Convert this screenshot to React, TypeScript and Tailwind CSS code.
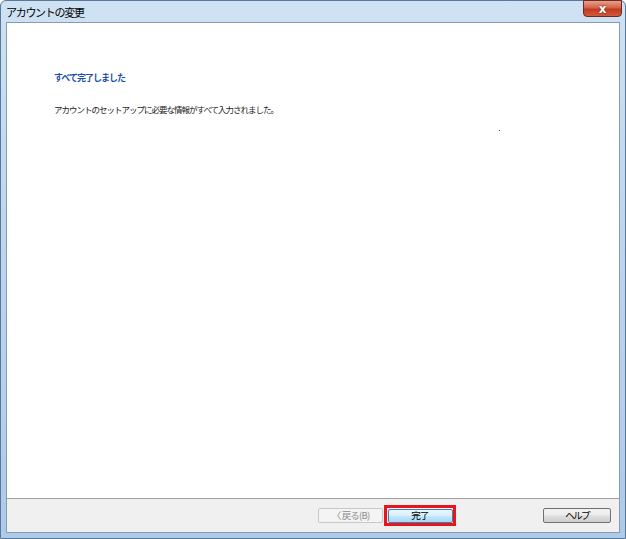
import React from "react";

export default function App() {
  const font = { fontFamily: '"Noto Sans CJK JP", "Noto Sans", sans-serif' };
  return (
    <div className="w-[626px] h-[539px] overflow-hidden bg-white" style={font}>
      <div className="relative w-[626px] h-[539px] rounded-t-[6px] border border-[#5a7898] bg-[linear-gradient(180deg,#cfe2f4_0%,#bfd6ee_40%,#aecaea_100%)] flex flex-col">
        {/* title bar */}
        <div className="h-[21px] flex items-center pl-[5px] text-[11px] tracking-[-1.3px] text-black leading-none">
          <span className="mt-[2px]">アカウントの変更</span>
        </div>
        {/* close button */}
        <div className="absolute top-[-1px] right-[3px] w-[39px] h-[17px] rounded-b-[4px] border border-[#6b2a20] bg-[linear-gradient(180deg,#e8a08c_0%,#d5624a_45%,#c33b1f_55%,#d0593c_100%)] flex items-center justify-center">
          <span className="text-white font-bold text-[12px] leading-none" style={{ fontFamily: '"DejaVu Sans", sans-serif', textShadow: "0 0 2px #5a1a10" }}>x</span>
        </div>
        {/* client */}
        <div className="flex-1 flex flex-col mx-[5px] mb-[5px] border border-[#8a9bb0] bg-white">
          <div className="flex-1 relative bg-white">
            <div className="pl-[47px] pt-[48px]">
              <div className="text-[#1e4fa8] font-bold text-[9px] tracking-[-1px] leading-[14px]">すべて完了しました</div>
              <div className="mt-[17px] text-[#222] text-[8.5px] tracking-[-1px] leading-[14px]">アカウントのセットアップに必要な情報がすべて入力されました。</div>
            </div>
            <div className="absolute left-[492px] top-[107px] w-[1px] h-[1px] bg-[#555]" />
          </div>
          <div className="h-[34px] shrink-0 border-t border-[#a0a0a0] bg-[#f0f0f0] flex items-center">
            <div className="ml-[311px] w-[65px] h-[15px] border border-[#c8c8c8] rounded-[2px] bg-[#f4f4f4] flex items-center justify-center text-[9.5px] tracking-[-0.8px] text-[#8c8c8c] leading-none">
              〈 戻る(B)
            </div>
            <div className="ml-[1px] w-[72px] h-[21px] border-[3px] border-[#e8141e] flex items-center justify-center">
              <div className="w-[65px] h-[14px] border border-[#3c7fb1] rounded-[2px] bg-[linear-gradient(180deg,#eaf6fd_0%,#d9f0fc_45%,#bee6fd_55%,#a7d9f5_100%)] flex items-center justify-center text-[9.5px] tracking-[-0.8px] text-black leading-none">
                完了
              </div>
            </div>
            <div className="ml-[87px] w-[68px] h-[15px] border border-[#707070] rounded-[2px] bg-[linear-gradient(180deg,#f2f2f2_0%,#ebebeb_45%,#dddddd_55%,#cfcfcf_100%)] flex items-center justify-center text-[9.5px] tracking-[-1.6px] text-black leading-none">
              ヘルプ
            </div>
          </div>
        </div>
      </div>
    </div>
  );
}
